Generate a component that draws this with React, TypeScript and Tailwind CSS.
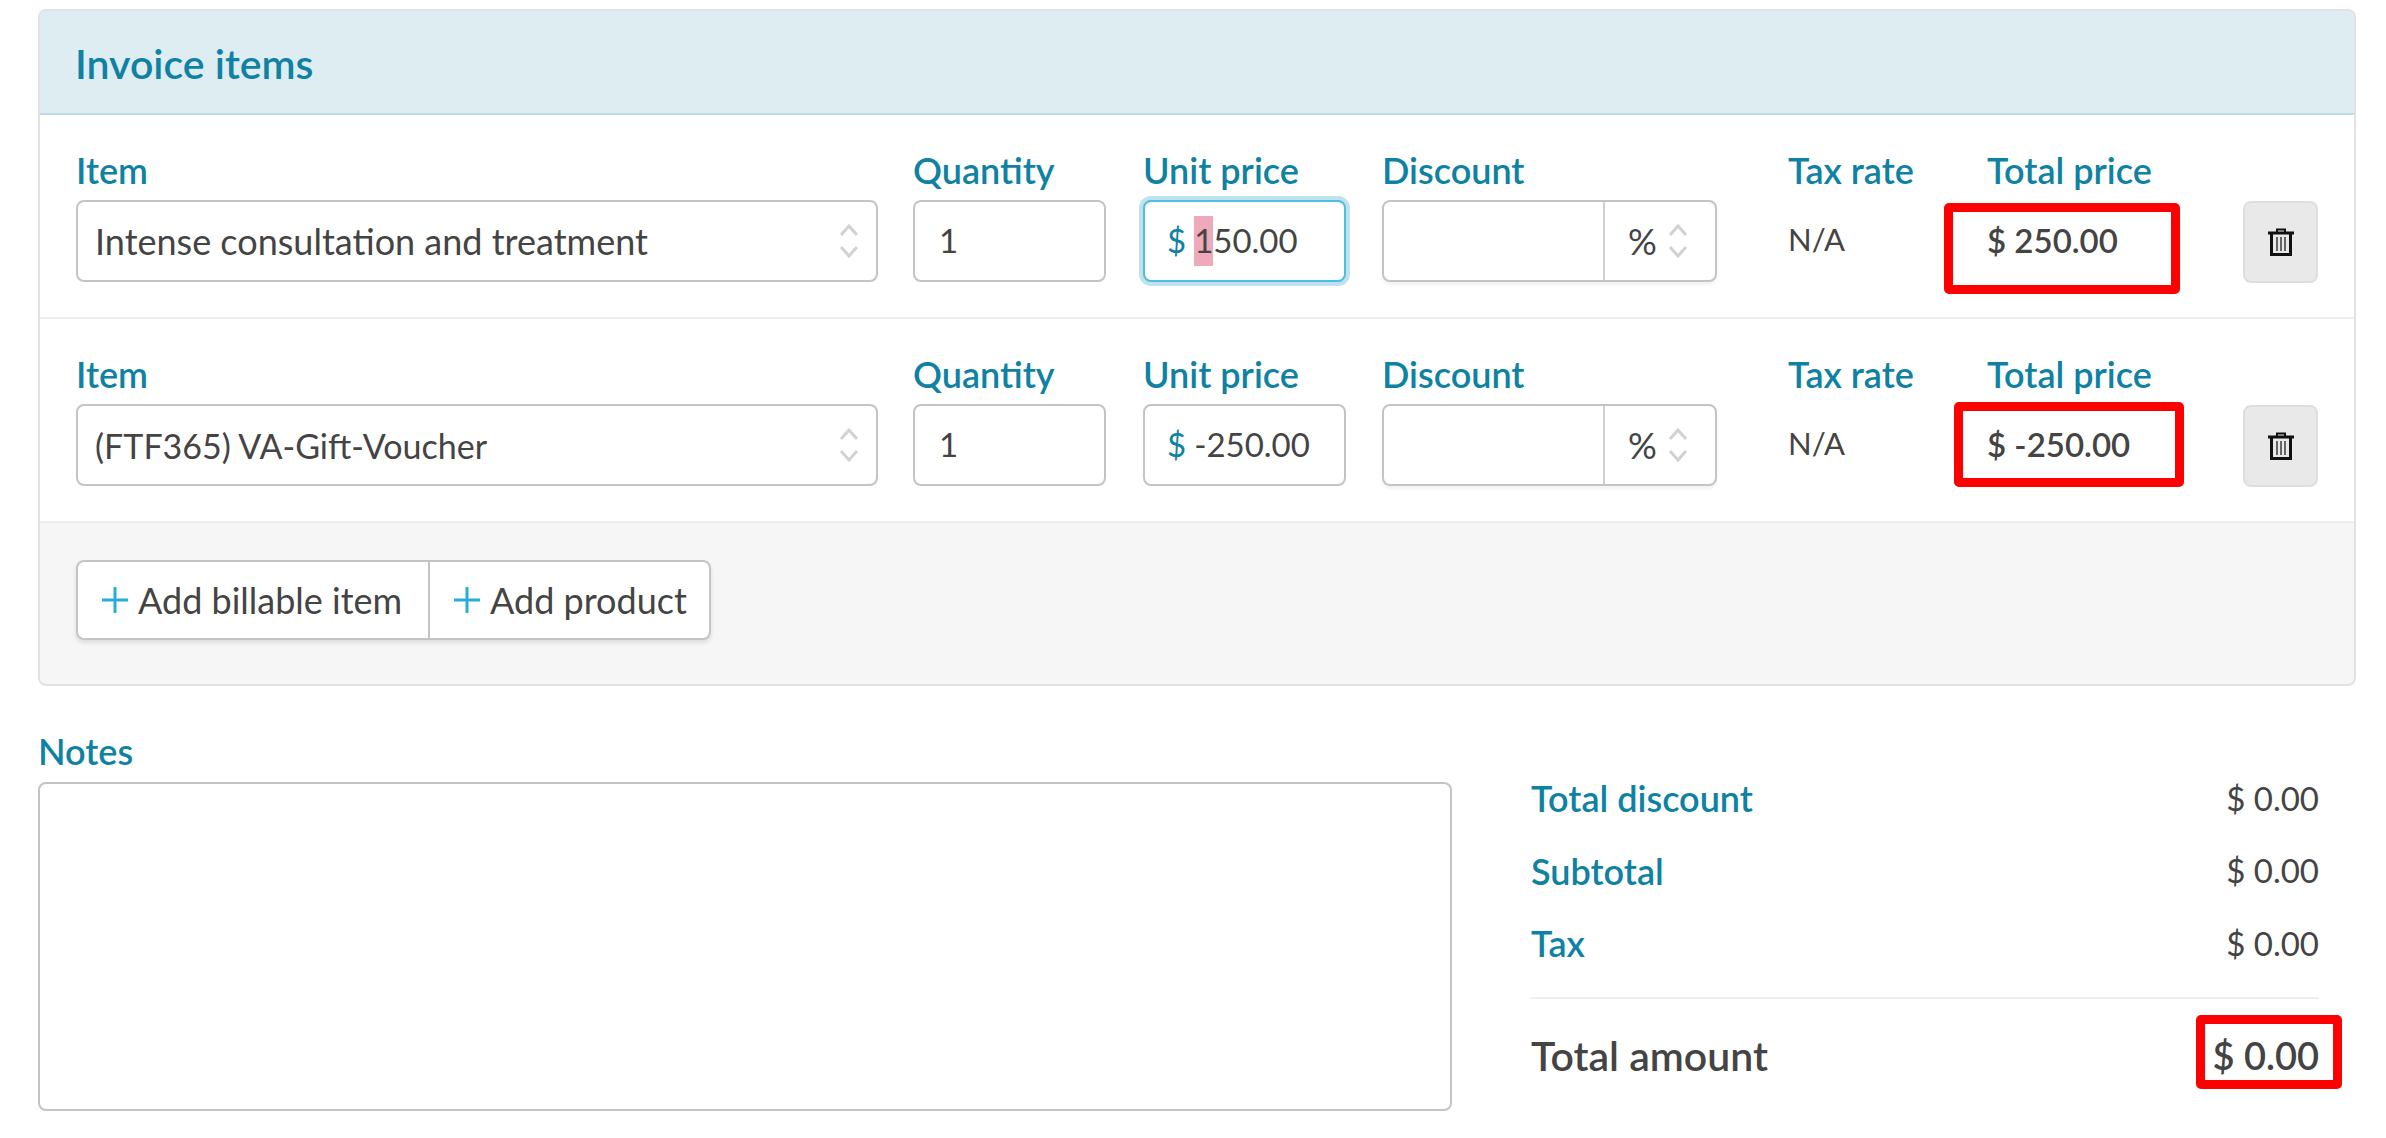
import React from 'react';

const labelClass = 'block h-[58px] text-[36px] leading-[56px] font-semibold text-[#0f82a3] whitespace-nowrap';
const boxClass = 'h-[82px] rounded-[8px] border-2 bg-white flex items-center text-[33px] text-[#444]';

const Chevrons: React.FC<{ className?: string }> = ({ className }) => (
  <svg className={className} width="20" height="34" viewBox="0 0 20 34" fill="none" stroke="#d2d2d2" strokeWidth="3">
    <path d="M2 11 L10 2 L18 11" />
    <path d="M2 23 L10 32 L18 23" />
  </svg>
);

const TrashIcon: React.FC = () => (
  <svg width="26" height="28" viewBox="0 0 26 28" fill="none" stroke="#111">
    <path d="M9 4 V1.5 H17 V4" strokeWidth="2" />
    <path d="M0 5 H26" strokeWidth="3" />
    <path d="M3.5 5 V26.5 H22.5 V5" strokeWidth="3" />
    <path d="M9 9 V23 M13 9 V23 M17 9 V23" strokeWidth="2" stroke="#666" />
  </svg>
);

const PlusIcon: React.FC = () => (
  <svg width="26" height="26" viewBox="0 0 26 26" stroke="#27aed6" strokeWidth="3">
    <path d="M13 0 V26 M0 13 H26" />
  </svg>
);

const Marker: React.FC<{ className: string }> = ({ className }) => (
  <div className={`absolute border-[9px] border-[#ff0000] rounded-[5px] ${className}`} />
);

const InvoiceRow: React.FC<{
  item: string;
  itemClass: string;
  price: string;
  total: string;
  focused?: boolean;
  marker: string;
}> = ({ item, itemClass, price, total, focused, marker }) => (
  <div className="relative flex h-[204px] pt-[27px] pl-[36px] border-b-2 border-[#eeeeee] bg-white last:h-[205px]">
    <div className="w-[802px]">
      <span className={labelClass}>Item</span>
      <div className={`${boxClass} border-[#c4c4c4] justify-between pl-[17px] pr-[17px]`}>
        <span className={itemClass}>{item}</span>
        <Chevrons />
      </div>
    </div>
    <div className="w-[193px] ml-[35px]">
      <span className={labelClass}>Quantity</span>
      <div className={`${boxClass} border-[#c4c4c4] pl-[24px]`}>1</div>
    </div>
    <div className="w-[203px] ml-[37px]">
      <span className={labelClass}>Unit price</span>
      <div className={`${boxClass} pl-[22px] ${focused ? 'border-[#4dbde0] ring-4 ring-[#bfe2ec]' : 'border-[#c4c4c4]'}`}>
        <span className="text-[#0f82a3] mr-[8px]">$</span>
        {focused ? (
          <>
            <span className="inline-flex items-center h-[50px] bg-[#eeaabb]">1</span>
            <span>50.00</span>
          </>
        ) : (
          <span>{price}</span>
        )}
      </div>
    </div>
    <div className="w-[335px] ml-[36px]">
      <span className={labelClass}>Discount</span>
      <div className={`${boxClass} border-[#c4c4c4] shadow-[0_3px_3px_rgba(0,0,0,0.05)]`}>
        <div className="w-[221px] h-full border-r-2 border-[#d0d0d0]" />
        <span className="ml-[23px] text-[36px]">%</span>
        <Chevrons className="ml-[11px]" />
      </div>
    </div>
    <div className="w-[199px] ml-[71px]">
      <span className={labelClass}>Tax rate</span>
      <div className="h-[78px] flex items-center text-[31px] text-[#444]">N/A</div>
    </div>
    <div className="w-[256px]">
      <span className={labelClass}>Total price</span>
      <div className="h-[82px] flex items-center text-[33px] font-semibold text-[#444]">$ {total}</div>
    </div>
    <div className="pt-[59px]">
      <button className="w-[75px] h-[82px] rounded-[8px] border-2 border-[#dedede] bg-[#e9e9e9] flex items-center justify-center">
        <TrashIcon />
      </button>
    </div>
    <Marker className={marker} />
  </div>
);

const SummaryRow: React.FC<{ label: string }> = ({ label }) => (
  <div className="flex justify-between items-center h-[72.5px]">
    <span className="text-[36px] font-semibold text-[#0f82a3]">{label}</span>
    <span className="text-[33px] text-[#444]">$ 0.00</span>
  </div>
);

const App: React.FC = () => {
  return (
    <div className="w-[2386px] h-[1138px] bg-white overflow-hidden pt-[9px] pl-[38px] font-['Lato','Noto_Sans',sans-serif]">
      <div className="w-[2318px] h-[677px] rounded-[8px] border-2 border-[#e2e2e2] overflow-hidden bg-[#f6f6f6]">
        <div className="h-[104px] bg-[#deedf2] border-b-2 border-[#bcdde8] pl-[35px] pt-[4px] flex items-center text-[41px] font-semibold text-[#0f82a3]">
          Invoice items
        </div>
        <InvoiceRow
          item="Intense consultation and treatment"
          itemClass="text-[36px]"
          price="150.00"
          total="250.00"
          focused
          marker="left-[1904px] top-[88px] w-[236px] h-[91px]"
        />
        <InvoiceRow
          item="(FTF365) VA-Gift-Voucher"
          itemClass="text-[34px]"
          price="-250.00"
          total="-250.00"
          marker="left-[1914px] top-[83px] w-[230px] h-[85px]"
        />
        <div className="pt-[37px] pl-[36px]">
          <div className="inline-flex h-[80px] rounded-[8px] border-2 border-[#c4c4c4] bg-white shadow-[0_3px_4px_rgba(0,0,0,0.1)] text-[36px] text-[#444]">
            <button className="flex items-center w-[352px] pl-[24px] gap-[10px] border-r-2 border-[#c4c4c4] whitespace-nowrap">
              <PlusIcon />
              Add billable item
            </button>
            <button className="flex items-center w-[279px] pl-[24px] gap-[10px] whitespace-nowrap">
              <PlusIcon />
              Add product
            </button>
          </div>
        </div>
      </div>
      <div className="flex mt-[42px]">
        <div className="w-[1414px]">
          <div className="h-[54px] text-[36px] leading-[46px] font-semibold text-[#0f82a3]">Notes</div>
          <div className="h-[329px] rounded-[8px] border-2 border-[#c4c4c4] bg-white" />
        </div>
        <div className="relative w-[788px] ml-[79px] pt-[34px]">
          <SummaryRow label="Total discount" />
          <SummaryRow label="Subtotal" />
          <SummaryRow label="Tax" />
          <div className="mt-[17px] border-t-2 border-[#eeeeee] flex justify-between items-center h-[116px] font-semibold text-[#444]">
            <span className="text-[41px]">Total amount</span>
            <span className="text-[38px]">$ 0.00</span>
          </div>
          <Marker className="left-[665px] top-[287px] w-[146px] h-[74px]" />
        </div>
      </div>
    </div>
  );
};

export default App;
